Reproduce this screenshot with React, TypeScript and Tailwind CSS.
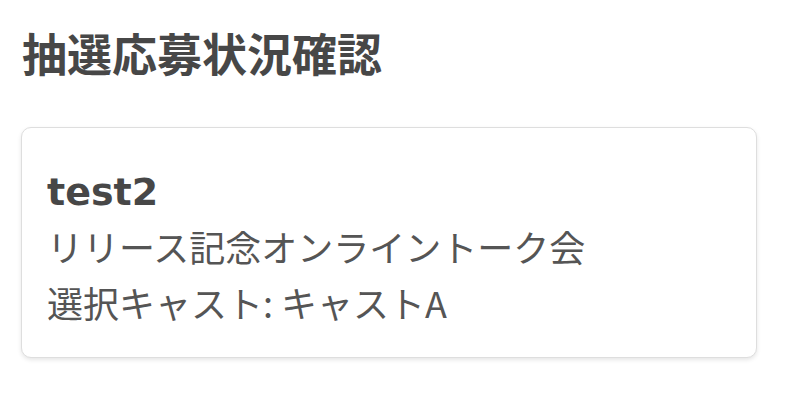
import React from "react";

export default function App() {
  return (
    <div
      className="w-[788px] h-[420px] bg-white px-[21px] pt-[23px]"
      style={{ fontFamily: '"Noto Sans CJK JP", "Noto Sans", sans-serif' }}
    >
      <h1 className="text-[45px] leading-[60px] font-bold text-[#474747] pl-[1px]">
        抽選応募状況確認
      </h1>
      <div className="mt-[44px] w-[736px] h-[231px] rounded-[10px] border border-[#dedede] bg-white shadow-[0_2px_4px_rgba(0,0,0,0.1)] px-[25px] pt-[38px]">
        <div
          className="text-[38px] leading-[52px] font-bold text-[#474747]"
          style={{ fontFamily: '"DejaVu Sans", sans-serif' }}
        >
          test2
        </div>
        <div className="text-[36px] leading-[56px] text-[#555555]">リリース記念オンライントーク会</div>
        <div className="text-[36px] leading-[56px] text-[#555555]">選択キャスト: キャストA</div>
      </div>
    </div>
  );
}
